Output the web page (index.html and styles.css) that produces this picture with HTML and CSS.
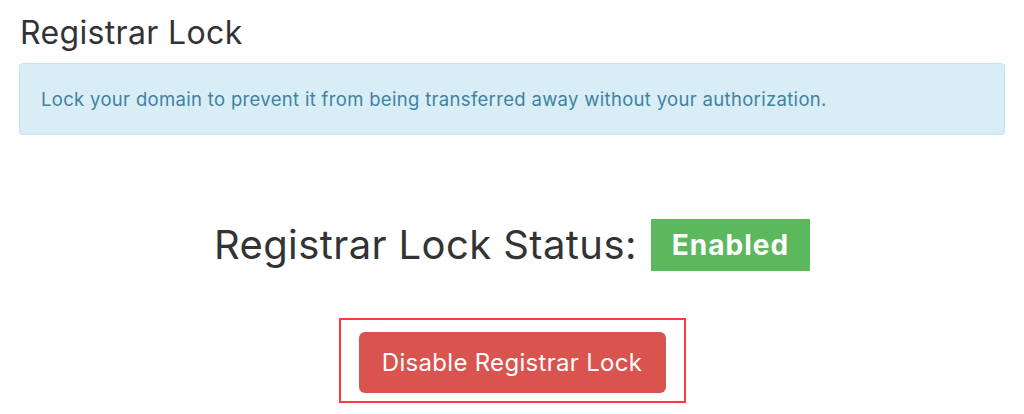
FILE: index.html
```html
<!DOCTYPE html>
<html lang="en">
<head>
  <meta charset="UTF-8" />
  <title>Registrar Lock</title>
  <link rel="stylesheet" href="styles.css">
</head>
<body>
  <div class="page">
    <h1 class="title">Registrar Lock</h1>
    <div class="alert">Lock your domain to prevent it from being transferred away without your authorization.</div>
    <!-- status -->
    <div class="status">
      <span class="status-label">Registrar Lock Status:</span>
      <span class="badge">Enabled</span>
    </div>
    <div class="actions">
      <div class="highlight"><button class="btn-danger" type="button">Disable Registrar Lock</button></div>
    </div>
  </div>
</body>
</html>
```
FILE: styles.css
```css
*{box-sizing:border-box;margin:0;padding:0}
body{font-family:Inter,'Noto Sans',sans-serif;background:#fff;color:#333;width:1024px;height:414px;overflow:hidden}
.page{padding:13px 19px 0}
.title{font-weight:400;font-size:32px;letter-spacing:.35px;line-height:39px;color:#333;padding-left:1px}
.alert{margin-top:11px;height:72px;background:#d9edf7;border:1px solid #bce8f1;border-radius:4px;color:#4082a2;font-size:18.5px;letter-spacing:.32px;padding:0 21px;display:flex;align-items:center}
/* status */
.status{margin-top:84px;display:flex;justify-content:center;align-items:center;gap:14px}
.status-label{font-size:40px;letter-spacing:.4px;line-height:52px;color:#333}
.badge{background:#5cb85c;color:#fff;font-weight:700;font-size:28px;letter-spacing:1px;height:52px;display:flex;align-items:center;padding:0 21px}
.actions{margin-top:47px;display:flex;justify-content:center}
.highlight{border:2px solid #ff3c3c;padding:12px 18px 8px}
.btn-danger{display:block;background:#d9534f;color:#fff;border:none;border-radius:6px;font-family:inherit;font-size:24px;letter-spacing:.3px;width:307px;height:61px}
```
